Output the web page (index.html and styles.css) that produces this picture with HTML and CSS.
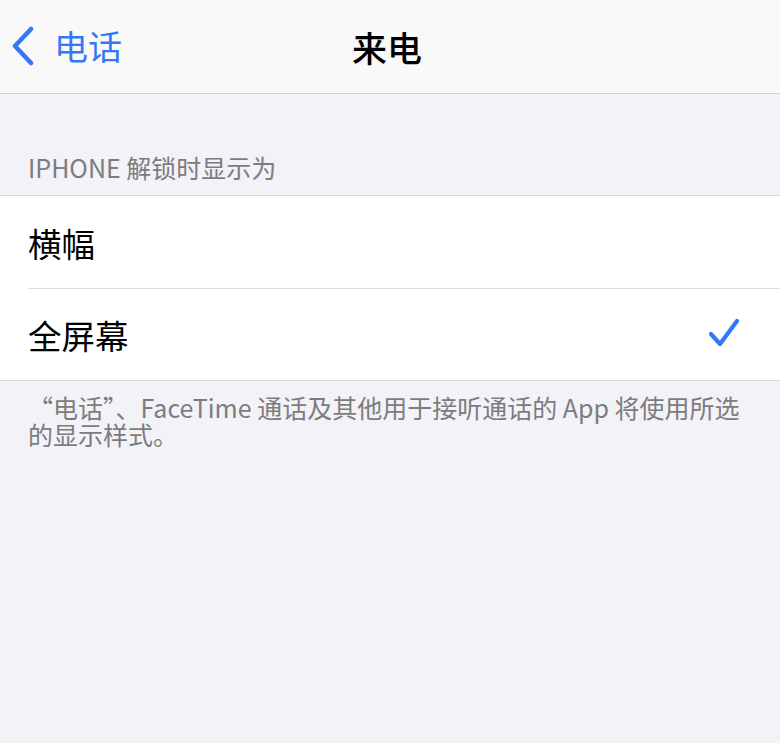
FILE: index.html
```html
<!DOCTYPE html>
<html lang="zh-CN">
<head>
    <meta charset="UTF-8">
    <meta name="viewport" content="width=device-width, initial-scale=1.0">
    <title>来电</title>
    <link rel="stylesheet" href="styles.css">
</head>
<body>
    <header class="nav-bar">
        <a class="nav-back" href="#">
            <svg class="chevron" width="26" height="40" viewBox="0 0 26 40">
                <path d="M21 3 L5 20 L21 37" fill="none" stroke="#3478f6" stroke-width="4.5" stroke-linecap="round" stroke-linejoin="round"/>
            </svg>
            <span>电话</span>
        </a>
        <h1 class="nav-title">来电</h1>
    </header>

    <main class="content">
        <div class="section-header">IPHONE 解锁时显示为</div>
        <ul class="group">
            <li class="row">
                <span>横幅</span>
            </li>
            <li class="row">
                <span>全屏幕</span>
                <svg class="check" width="34" height="32" viewBox="0 0 34 32">
                    <path d="M3 17 L12 27 L29 4" fill="none" stroke="#3478f6" stroke-width="4.2" stroke-linecap="round" stroke-linejoin="round"/>
                </svg>
            </li>
        </ul>
        <p class="section-footer">“电话”、FaceTime 通话及其他用于接听通话的 App 将使用所选的显示样式。</p>
    </main>
</body>
</html>
```

FILE: styles.css
```css
* {
    margin: 0;
    padding: 0;
    box-sizing: border-box;
}

body {
    font-family: "Noto Sans CJK SC", "Noto Sans", sans-serif;
    background: #f2f2f7;
    width: 780px;
    min-height: 743px;
    color: #000;
}

.nav-bar {
    height: 94px;
    background: #f9f9f9;
    border-bottom: 1px solid #d2d2d6;
    display: flex;
    align-items: center;
    justify-content: center;
    position: relative;
}

.nav-back {
    position: absolute;
    left: 10px;
    top: 26px;
    display: flex;
    align-items: center;
    gap: 18px;
    color: #3478f6;
    text-decoration: none;
    font-size: 34px;
    line-height: 40px;
}

.nav-title {
    font-size: 35px;
    font-weight: 500;
    line-height: 40px;
    margin-left: -6px;
}

.content {
    padding-top: 57px;
}

.section-header {
    padding: 0 28px;
    font-size: 25px;
    line-height: 32px;
    color: #7c7c80;
    margin-bottom: 12px;
}

.group {
    list-style: none;
    background: #fff;
    border-top: 1px solid #d8d8dc;
    border-bottom: 1px solid #d8d8dc;
}

.row {
    height: 92px;
    margin-left: 28px;
    padding-right: 38px;
    display: flex;
    align-items: center;
    justify-content: space-between;
    font-size: 33.5px;
}

.row + .row {
    border-top: 1px solid #dcdce0;
}

.check {
    margin-top: -3px;
}

.section-footer {
    padding: 13px 28px 0;
    font-size: 25px;
    line-height: 27px;
    color: #7c7c80;
}
```
